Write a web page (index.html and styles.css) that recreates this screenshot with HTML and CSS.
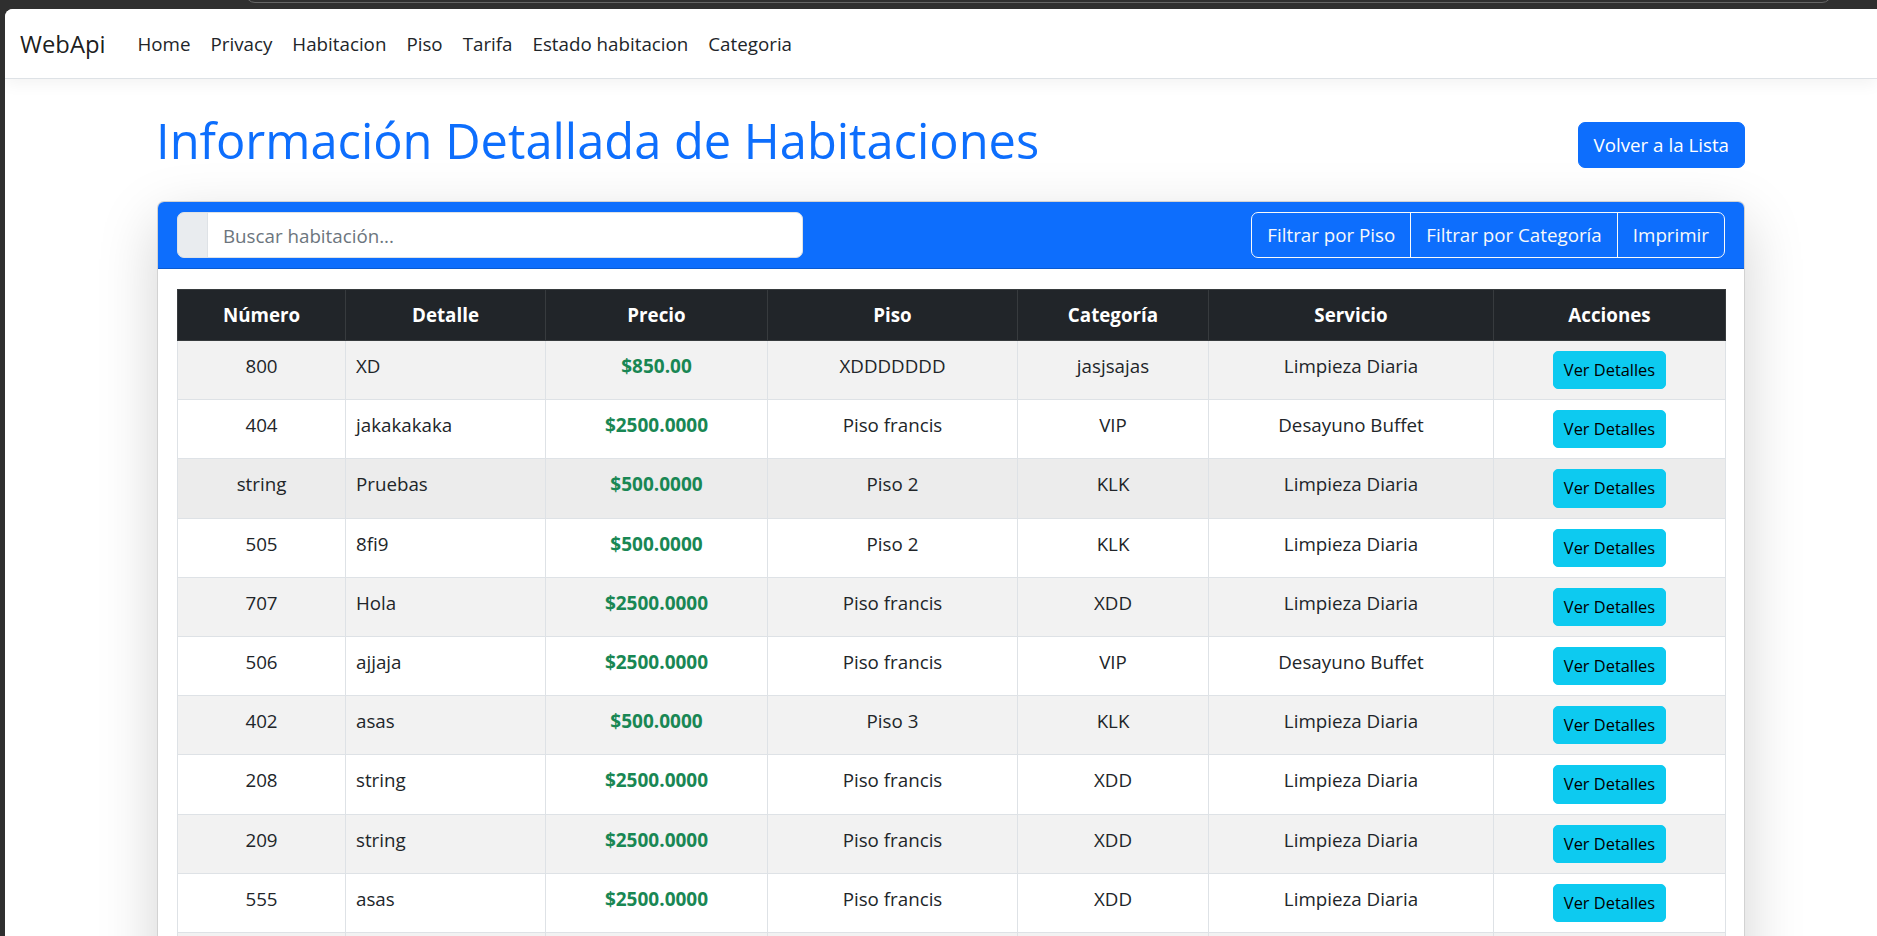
FILE: index.html
```html
<!DOCTYPE html>
<html lang="es">
<head>
<meta charset="utf-8">
<title>Habitaciones - WebApi</title>
<link rel="stylesheet" href="styles.css">
</head>
<body>
<div class="chrome-bar"></div>
<div class="window">
  <nav class="navbar">
    <a class="brand" href="#">WebApi</a>
    <ul class="nav">
      <li><a class="nav-link" href="#">Home</a></li>
      <li><a class="nav-link" href="#">Privacy</a></li>
      <li><a class="nav-link" href="#">Habitacion</a></li>
      <li><a class="nav-link" href="#">Piso</a></li>
      <li><a class="nav-link" href="#">Tarifa</a></li>
      <li><a class="nav-link" href="#">Estado habitacion</a></li>
      <li><a class="nav-link" href="#">Categoria</a></li>
    </ul>
  </nav>

  <main class="container">
    <div class="title-row">
      <h1 class="page-title">Información Detallada de Habitaciones</h1>
      <a class="btn-primary" href="#">Volver a la Lista</a>
    </div>

    <section class="card">
      <div class="card-header">
        <div class="input-group">
          <span class="input-group-text"></span>
          <input class="search" type="text" placeholder="Buscar habitación...">
        </div>
        <div class="btn-group">
          <button class="btn-outline">Filtrar por Piso</button>
          <button class="btn-outline">Filtrar por Categoría</button>
          <button class="btn-outline">Imprimir</button>
        </div>
      </div>
      <div class="card-body">
        <table class="rooms">
          <colgroup>
            <col class="col-num"><col class="col-det"><col class="col-pre"><col class="col-piso"><col class="col-cat"><col class="col-serv"><col class="col-acc">
          </colgroup>
          <thead>
            <tr><th>Número</th><th>Detalle</th><th>Precio</th><th>Piso</th><th>Categoría</th><th>Servicio</th><th>Acciones</th></tr>
          </thead>
          <tbody>
            <tr class="odd"><td>800</td><td class="left">XD</td><td class="price">$850.00</td><td>XDDDDDDD</td><td>jasjsajas</td><td>Limpieza Diaria</td><td><a class="btn-info" href="#">Ver Detalles</a></td></tr>
            <tr><td>404</td><td class="left">jakakakaka</td><td class="price">$2500.0000</td><td>Piso francis</td><td>VIP</td><td>Desayuno Buffet</td><td><a class="btn-info" href="#">Ver Detalles</a></td></tr>
            <tr class="hover"><td>string</td><td class="left">Pruebas</td><td class="price">$500.0000</td><td>Piso 2</td><td>KLK</td><td>Limpieza Diaria</td><td><a class="btn-info" href="#">Ver Detalles</a></td></tr>
            <tr><td>505</td><td class="left">8fi9</td><td class="price">$500.0000</td><td>Piso 2</td><td>KLK</td><td>Limpieza Diaria</td><td><a class="btn-info" href="#">Ver Detalles</a></td></tr>
            <tr class="odd"><td>707</td><td class="left">Hola</td><td class="price">$2500.0000</td><td>Piso francis</td><td>XDD</td><td>Limpieza Diaria</td><td><a class="btn-info" href="#">Ver Detalles</a></td></tr>
            <tr><td>506</td><td class="left">ajjaja</td><td class="price">$2500.0000</td><td>Piso francis</td><td>VIP</td><td>Desayuno Buffet</td><td><a class="btn-info" href="#">Ver Detalles</a></td></tr>
            <tr class="odd"><td>402</td><td class="left">asas</td><td class="price">$500.0000</td><td>Piso 3</td><td>KLK</td><td>Limpieza Diaria</td><td><a class="btn-info" href="#">Ver Detalles</a></td></tr>
            <tr><td>208</td><td class="left">string</td><td class="price">$2500.0000</td><td>Piso francis</td><td>XDD</td><td>Limpieza Diaria</td><td><a class="btn-info" href="#">Ver Detalles</a></td></tr>
            <tr class="odd"><td>209</td><td class="left">string</td><td class="price">$2500.0000</td><td>Piso francis</td><td>XDD</td><td>Limpieza Diaria</td><td><a class="btn-info" href="#">Ver Detalles</a></td></tr>
            <tr><td>555</td><td class="left">asas</td><td class="price">$2500.0000</td><td>Piso francis</td><td>XDD</td><td>Limpieza Diaria</td><td><a class="btn-info" href="#">Ver Detalles</a></td></tr>
            <tr class="odd empty"><td></td><td></td><td></td><td></td><td></td><td></td><td></td></tr>
          </tbody>
        </table>
      </div>
    </section>
  </main>
</div>
</body>
</html>
```

FILE: styles.css
```css
* { box-sizing: border-box; }

html, body {
  margin: 0;
  padding: 0;
  height: 936px;
  overflow: hidden;
}

body {
  background: #2f2f2f;
  font-family: "Open Sans", "Noto Sans", sans-serif;
  font-size: 18.75px;
  line-height: 30px;
  color: #212529;
  position: relative;
}

.chrome-bar {
  position: absolute;
  left: 245px;
  top: -20px;
  width: 1587px;
  height: 23px;
  border: 1.5px solid #666;
  border-radius: 10px;
}

.window {
  margin: 9px 0 0 5px;
  background: #fff;
  border-top-left-radius: 8px;
  height: 927px;
  overflow: hidden;
}

/* Navbar */
.navbar {
  height: 70px;
  display: flex;
  align-items: center;
  padding: 0 15px;
  background: #fff;
  border-bottom: 1px solid #dee2e6;
  box-shadow: 0 5px 15px rgba(0, 0, 0, 0.05);
  position: relative;
}

.brand {
  font-size: 23.8px;
  color: rgba(0, 0, 0, 0.9);
  text-decoration: none;
  margin-right: 22px;
  line-height: 36px;
}

.nav {
  display: flex;
  list-style: none;
  margin: 0;
  padding: 0;
}

.nav-link {
  display: block;
  padding: 0 10px;
  color: #212529;
  text-decoration: none;
  line-height: 30px;
}

/* Main */
.container {
  margin-left: 152px;
  width: 1588px;
  padding-top: 31px;
}

.title-row {
  height: 70px;
  display: flex;
  justify-content: space-between;
  align-items: center;
}

.page-title {
  margin: 0 0 10px -1px;
  font-size: 48.8px;
  line-height: 60px;
  font-weight: 500;
  color: #0d6efd;
}

.btn-primary {
  display: block;
  height: 46px;
  line-height: 44px;
  padding: 0 15px;
  border: 1px solid #0d6efd;
  border-radius: 7px;
  background: #0d6efd;
  color: #fff;
  text-decoration: none;
}

/* Card */
.card {
  margin-top: 21px;
  border: 1px solid rgba(0, 0, 0, 0.175);
  border-radius: 7px;
  background: #fff;
  box-shadow: 0 20px 60px rgba(0, 0, 0, 0.175);
}

.card-header {
  display: flex;
  justify-content: space-between;
  align-items: center;
  padding: 10px 19px;
  background: #0d6efd;
  border-bottom: 1px solid rgba(0, 0, 0, 0.175);
  border-radius: 6px 6px 0 0;
}

.input-group {
  display: flex;
  width: 626px;
  height: 46px;
}

.input-group-text {
  width: 31px;
  background: #e9ecef;
  border: 1px solid #dee2e6;
  border-radius: 7px 0 0 7px;
}

.search {
  flex: 1;
  margin-left: -1px;
  height: 46px;
  border: 1px solid #dee2e6;
  border-radius: 0 7px 7px 0;
  padding: 0 15px;
  font-family: inherit;
  font-size: 18.75px;
  color: #212529;
  background: #fff;
  outline: none;
}

.search::placeholder {
  color: #6c757d;
}

.btn-group {
  display: flex;
}

.btn-outline {
  height: 46px;
  padding: 0 15px;
  background: transparent;
  border: 1px solid #f8f9fa;
  color: #f8f9fa;
  font-family: inherit;
  font-size: 18.75px;
  line-height: 44px;
  border-radius: 0;
}

.btn-outline + .btn-outline {
  margin-left: -1px;
}

.btn-outline:first-child {
  border-radius: 7px 0 0 7px;
}

.btn-outline:last-child {
  border-radius: 0 7px 7px 0;
}

.card-body {
  padding: 20px 19px;
}

/* Table */
.rooms {
  width: 1548px;
  table-layout: fixed;
  border-collapse: collapse;
}

.col-num { width: 168px; }
.col-det { width: 200px; }
.col-pre { width: 222px; }
.col-piso { width: 250px; }
.col-cat { width: 191px; }
.col-serv { width: 285px; }
.col-acc { width: 232px; }

.rooms th {
  background: #212529;
  color: #fff;
  font-weight: 700;
  text-align: center;
  padding: 10px;
  line-height: 30px;
  border: 1px solid #373b3e;
}

.rooms td {
  padding: 10px;
  line-height: 30px;
  text-align: center;
  vertical-align: top;
  border: 1px solid #dee2e6;
  background: #fff;
  white-space: nowrap;
}

.rooms tr.odd td { background: #f2f2f2; }
.rooms tr.hover td { background: #ececec; }
.rooms tr.empty td { height: 59px; }

.rooms td.left { text-align: left; }

.rooms td.price {
  color: #198754;
  font-weight: 700;
  font-size: 19px;
}

.btn-info {
  display: inline-block;
  height: 38.2px;
  line-height: 36px;
  padding: 0 10px;
  font-size: 16.4px;
  background: #0dcaf0;
  border: 1px solid #0dcaf0;
  border-radius: 5px;
  color: #000;
  text-decoration: none;
  vertical-align: top;
}
```
